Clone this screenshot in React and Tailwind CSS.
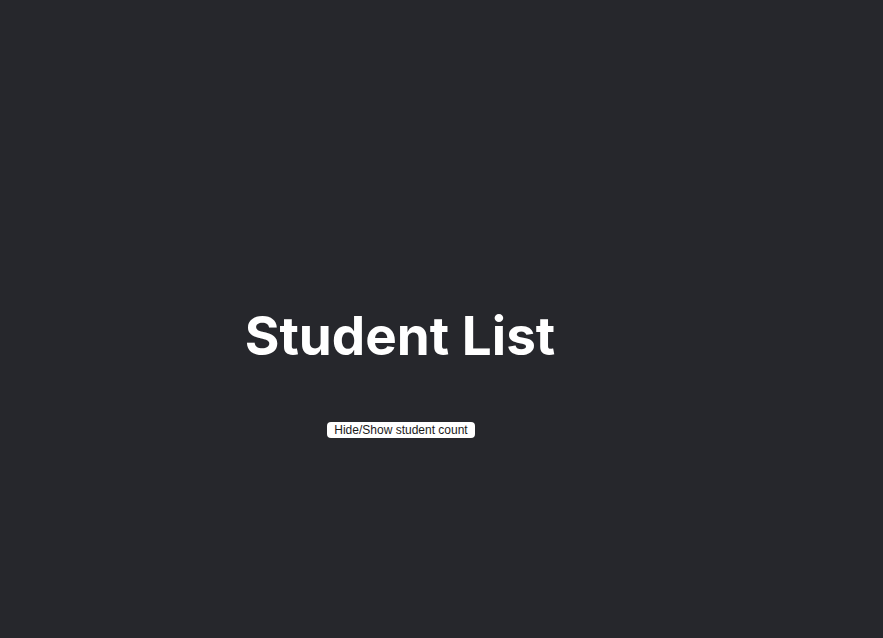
import React, { useState } from 'react'

export default function App() {
  const [show, setShow] = useState(false)

  return (
    <div className="min-h-screen bg-[#26272c] text-white" style={{ fontFamily: 'Inter, "Liberation Sans", sans-serif' }}>
      <div className="w-[800px] flex flex-col items-center pt-[307px]">
        <h1 className="text-[53px] leading-[1.1] font-bold">Student List</h1>
        {show && <p className="mt-2 text-sm">Students: 0</p>}
        <button
          onClick={() => setShow(!show)}
          className="mt-[57px] ml-[2px] h-[16px] px-[7px] rounded-[4px] bg-white text-[#1a1a1a] text-[12px] leading-[16px]"
          style={{ fontFamily: '"Liberation Sans", Arial, sans-serif' }}
        >
          Hide/Show student count
        </button>
      </div>
    </div>
  )
}
